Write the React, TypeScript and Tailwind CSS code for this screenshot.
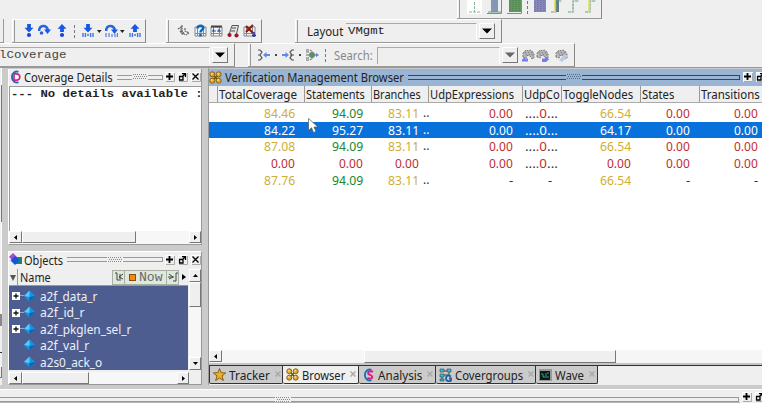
import React, { useLayoutEffect, useRef } from "react";

/* Text condensed or widened to a fixed measure. */
function Fit({ w, children, className = "" }: { w: number; children: React.ReactNode; className?: string }) {
  const ref = useRef<HTMLSpanElement>(null);
  useLayoutEffect(() => {
    const el = ref.current;
    if (el) el.style.transform = `scaleX(${w / el.offsetWidth})`;
  }, [w]);
  return (
    <span className={`flex shrink-0 items-center whitespace-nowrap ${className}`} style={{ width: w }}>
      <span ref={ref} className="block shrink-0 origin-left whitespace-pre">{children}</span>
    </span>
  );
}

const Bar = ({ className, children }: { className: string; children?: React.ReactNode }) => (
  <div className={`flex shrink-0 items-center border-t border-r border-b border-t-white border-r-[#888] border-b-[#999] ${className}`}>
    <div className="h-full w-[3px] shrink-0 border-r border-l border-r-[#999] border-l-white" />
    {children}
  </div>
);

const raised = "border border-t-white border-l-white border-r-[#777] border-b-[#777] bg-[#efefef]";

function Combo({ className, text, gray }: { className: string; text?: React.ReactNode; gray?: boolean }) {
  return (
    <div className={`flex shrink-0 items-center ${className}`}>
      <div className={`flex h-full flex-1 items-center overflow-hidden border-t border-r border-t-[#aaa] border-r-white ${gray ? "border-l border-l-[#aaa]" : ""}`}>{text}</div>
      <div className={`mr-px ml-[2px] flex h-[16px] w-[16px] items-center justify-center ${raised}`}>
        <svg width="10" height="6"><path d="M0 0.5h10L5 5.5z" fill={gray ? "#666" : "#000"} /></svg>
      </div>
    </div>
  );
}

const Arrow = ({ up, line }: { up?: boolean; line?: boolean }) => (
  <svg width="12" height="14" viewBox="0 0 12 14" className="shrink-0">
    <path d={up ? "M6 0l4.500 4.700H7.900V8H4.100V4.700H1.500z" : "M4.100 0h3.800v3.800h2.600L6 8.500 1.500 3.800h2.600z"} fill="#1858e8" />
    {line ? <path d="M1 9v4M3.4 9v4M8.6 9v4M11 9v4M5 11h2" stroke="#4674da" strokeWidth="1.4" /> : <circle cx="6" cy="11" r="2.1" fill="#1846da" />}
  </svg>
);
const Loop = ({ line }: { line?: boolean }) => (
  <svg width="13" height="14" viewBox="0 0 13 14" className="shrink-0">
    <path d="M1 7C1.5 1 8 0 10 6" fill="none" stroke="#2866df" strokeWidth="2.6" />
    <path d="M6 5.5h7L9.5 10z" fill="#1858e8" />
    {line ? <path d="M1 9v4M4 9v4M7 10v3M10 10v3M12.4 9v4" stroke="#5480dc" strokeWidth="1.2" /> : <circle cx="3.5" cy="9" r="1.8" fill="#315fd2" />}
  </svg>
);
const Dot = () => <svg width="5" height="3" className="shrink-0"><path d="M0 0h4.6L2.3 3z" fill="#222" /></svg>;
const Dash = () => <div className="h-[13px] w-px shrink-0 border-l border-dashed border-[#777]" />;

const MiniWindow = ({ kind }: { kind: string }) => (
  <svg width="13" height="14" viewBox="0 0 13 14" className="shrink-0">
    {kind === "wave" && <path d="M1 5l3-2v4l3 3M5 1v6l3 4M8 4v3l4 2-3 2M3 7l3 4" fill="none" stroke="#666" strokeWidth="1.2" strokeDasharray="2 0.5" />}
    {kind !== "wave" && kind !== "find" && <path d="M1 3h11v9H1zM1 9.5h11M3.5 3v9M9.5 3v9" fill="#f4f4f4" stroke="#858b8e" />}
    {kind === "help" && <path d="M3.5 4.500C3.500 .6 10 1 9.300 4.500C8.5 6 6.5 6 6.5 8.5M6.5 10v2.5" fill="none" stroke="#0869bd" strokeWidth="2.5" />}
    {kind === "win" && <><path d="M1 2.5h11" stroke="#444" strokeWidth="2" /><path d="M3.5 5v3M9 5v3M2 7h4M7 7h4" stroke="#2756ad" strokeWidth="1.2" /></>}
    {kind === "find" && <><path d="M2.500 9L5 1.500h6.500L9.500 10M5 4h4M4 7h4" fill="#e4e4e4" stroke="#555" /><circle cx="2.500" cy="11" r="2.1" fill="#a31424" /><circle cx="9.500" cy="11.5" r="2.1" fill="#a31424" /></>}
    {kind === "cut" && <><path d="M3 2l7 7M10 1L3 8" stroke="#8c1810" strokeWidth="2.2" /><path d="M11 8v5M9 11.5h4" stroke="#1934b8" strokeWidth="1.5" /></>}
  </svg>
);

const Branch = ({ kind }: { kind: number }) => (
  <svg width="14" height="12" viewBox="0 0 14 12" className="shrink-0">
    {kind === 0 && <><path d="M1 1h2l2 2-2 3H1h2l2 3-2 2H1" fill="none" stroke="#555" strokeWidth="1.2" /><path d="M6 6l3.5-3v2H13v2H9.500v2z" fill="#5a8de8" /></>}
    {kind === 1 && <><path d="M13 1h-2L9 3l2 3h2-4 2L9 9l2 2h2" fill="none" stroke="#555" strokeWidth="1.2" /><path d="M8 6L4.500 3v2H1v2h3.500v2z" fill="#5a8de8" /></>}
    {kind === 2 && <><path d="M1 1h4l3 2M1 6h12M1 11h4l3-2M1 3h3M1 9h3" fill="none" stroke="#666" strokeDasharray="3 1" /><circle cx="7" cy="6" r="3" fill="#5e8d66" /><path d="M11 4l3 2-3 2z" fill="#5579ff" /></>}
  </svg>
);

const Binoculars = ({ kind }: { kind: number }) => (
  <svg width="13" height="13" viewBox="0 0 13 13" className="shrink-0">
    <path d="M1 8V4l2-2 2-1 1 1 2-1 2 1 2 3v4l-2 1-2-3-2-1-2 3z" fill="#b8b8b8" stroke="#777" strokeDasharray="2 1" />
    <path d="M3 3l2 4M6 3l2 3M9 3l2 4" stroke="#777" strokeDasharray="1.5 1" />
    {kind === 0 && <path d="M0 10.500L3 8v1.500h3v3H0z" fill="#7b7bf0" />}
    {kind === 1 && <path d="M13 10.500L10 13H6V9.500h3V8h2z" fill="#7b7bf0" />}
    {kind === 2 && <path d="M4 11l6-6 3 2-6 6z" fill="#b9cce3" />}
  </svg>
);

const Edge = ({ kind }: { kind: number }) => {
  const fills = ["#fff", "#8497b5", "#64965e", "#8888ba"];
  return (
    <svg width="15" height="14" viewBox="0 0 15 14" className="shrink-0">
      {kind < 3 && <><path d="M0 0h15v14H0z" fill={kind ? "#eee" : "#fff"} />{kind > 0 && <path d="M14.5 0v13.5H0" fill="none" stroke="#888" />}</>}
      {kind === 0 && <path d="M2 12h11M7.5 2v10" stroke="#86b59a" strokeDasharray="3 1" />}
      {kind === 1 && <><path d="M4 0h7v12H4z" fill={fills[1]} /><path d="M1 12h13" stroke="#6c9b81" /></>}
      {(kind === 2 || kind === 3) && <><path d="M2 0h12v12H2z" fill={fills[kind]} /><path d="M3 1v11M6 0v12M9 0v12M12 0v12" stroke={kind === 2 ? "#438050" : "#62679c"} strokeDasharray="1 1" /></>}
      {kind > 3 && <>{kind === 4 && <path d="M6 0h4v12H6z" fill="#637991" />}<path d="M2 12h5V1h6" fill="none" stroke="#69a57c" strokeWidth="1.2" strokeDasharray="3 .6" />{kind !== 5 && <path d="M6 0v12" stroke="#e9dc49" strokeWidth="1.5" />}</>}
    </svg>
  );
};

function TitleButtons() {
  return (
    <div className="flex shrink-0 gap-[3px]">
      {["M4.500 1v7M1 4.500h7", "M1.500 4.500h3.500v3.500H1.500zM4 5l3-3M4 1.700h3.500V5", "M1.500 1.500l6 6M7.500 1.500l-6 6"].map((d, i) => (
        <svg key={i} width="10" height="10" viewBox="0 0 10 10" className="bg-[#eee]">
          <path d="M.5 9.500V.5h9" fill="none" stroke="#fff" /><path d="M9.500 1v8.500H1" fill="none" stroke="#aaa" />
          <path d={d} fill="none" stroke="#000" strokeWidth={i === 0 ? 1.8 : 1.3} />
        </svg>
      ))}
    </div>
  );
}

const Rails = ({ blue, className, left = "flex-1" }: { blue?: boolean; className: string; left?: string }) => (
  <div className={`flex h-[5px] shrink-0 items-center ${className}`}>
    <div className={`h-[5px] border-t border-b ${left} ${blue ? "border-[#294967]" : "border-[#999]"}`} />
    <svg width="16" height="6" className="shrink-0">
      {[1, 3, 5].map((y) => <path key={y} d={`M${y === 3 ? 2 : 1} ${y - 0.5}h14`} stroke={blue ? "#516e8b" : "#888"} strokeDasharray="1 1" />)}
    </svg>
    <div className={`h-[5px] flex-1 border-t border-r border-b ${blue ? "border-[#294967]" : "border-[#999]"}`} />
  </div>
);

const Bronze = () => (
  <svg width="13" height="13" viewBox="0 0 13 13" className="shrink-0">
    <path d="M3 3l7 7M10 3l-7 7" stroke="#72500d" strokeWidth="1.500" />
    {[[3.3, 3.3], [9.7, 3.3], [3.3, 9.7], [9.7, 9.7]].map(([x, y]) => (
      <g key={`${x}-${y}`}><circle cx={x} cy={y} r="2.5" fill="#dcaa30" stroke="#8a6314" /><circle cx={x - 0.6} cy={y - 0.6} r="1" fill="#f5d77a" /></g>
    ))}
  </svg>
);
const Ring = ({ letter }: { letter: string }) => (
  <svg width="13" height="14" viewBox="0 0 13 14" className="shrink-0">
    <path d="M9.500 1.800A5 5.500 0 1 0 9.500 12.200" fill="none" stroke="#1d70b8" strokeWidth="1.900" />
    {letter === "D" ? <path d="M5 3.800h2C12 3.800 12 10.200 7 10.200H5z" fill="#fff" stroke="#d42183" strokeWidth="1.700" /> : <path d="M11 3.800C7 2.500 5.500 4 6.500 6c1 1 4 1 3.800 3C10 11 7.500 11 5.500 10" fill="none" stroke="#d42183" strokeWidth="2" />}
  </svg>
);
const Diamond = () => (
  <svg width="11" height="12" viewBox="0 0 11 12" className="shrink-0">
    <path d="M5.500.5L11 6l-5.500 5.500L0 6z" fill="#1196e8" /><path d="M5.500.5L0 6l5.500 1z" fill="#57c9fa" /><path d="M11 6l-5.500 5.500V7z" fill="#0763ab" />
  </svg>
);

const Tip = ({ dir, className = "" }: { dir: "l" | "r" | "u" | "d"; className?: string }) => (
  <div className={`flex shrink-0 items-center justify-center ${raised} ${className}`}>
    <svg width="5" height="5" viewBox="0 0 5 5">
      <path d={{ l: "M4 0v5L1 2.500z", r: "M1 0v5l3-2.500z", u: "M0 4h5L2.500 1z", d: "M0 1h5L2.500 4z" }[dir]} />
    </svg>
  </div>
);

const Y = "text-[#cfae35]", G = "text-[#20852c]", R = "text-[#bf2e2d]", K = "text-[#333]";
const columns = [
  { name: "TotalCoverage", box: "w-[87px] pr-[9px]", w: 78 },
  { name: "Statements", box: "w-[67px] pr-[8px]", w: 59 },
  { name: "Branches", box: "w-[57px] pr-[9px]", w: 48 },
  { name: "UdpExpressions", box: "w-[94px] pr-[9px]", w: 84 },
  { name: "UdpCo", box: "w-[39px]", w: 36 },
  { name: "ToggleNodes", box: "w-[79px] pr-[9px]", w: 70 },
  { name: "States", box: "w-[59px] pr-[9px]", w: 32 },
  { name: "Transitions", box: "w-[63px] pr-[4px]", w: 59 },
];
const rows = [
  [["84.46", Y], ["94.09", G], ["83.11", Y], ["0.00", R], ["u", R], ["66.54", Y], ["0.00", R], ["0.00", R]],
  [["84.22", ""], ["95.27", ""], ["83.11", ""], ["0.00", ""], ["u", ""], ["64.17", ""], ["0.00", ""], ["0.00", ""]],
  [["87.08", Y], ["94.09", G], ["83.11", Y], ["0.00", R], ["u", R], ["66.54", Y], ["0.00", R], ["0.00", R]],
  [["0.00", R], ["0.00", R], ["0.00", R], ["0.00", R], ["u", R], ["0.00", R], ["0.00", R], ["0.00", R]],
  [["87.76", Y], ["94.09", G], ["83.11", Y], ["-", K], ["-", K], ["66.54", Y], ["-", K], ["-", K]],
];

function Cell({ v, c, i, r }: { v: string; c: string; i: number; r: number }) {
  const w = v === "-" ? 4 : v.length === 4 ? 24 : 31;
  const dots = r === 1 ? "" : "text-[#333]";
  return (
    <div className={`flex shrink-0 ${i === 4 ? "justify-start pl-[3px]" : "justify-end"} ${columns[i].box} ${c}`}>
      {v === "u" ? <Fit w={33}><span className={dots}>...</span>.0<span className={dots}>...</span></Fit>
        : <Fit w={w} className={i === 4 ? "ml-[23px]" : ""}>{v}</Fit>}
      {i === 2 && <span className={`-mr-[9px] w-[9px] pl-[4px] text-[12px] ${r === 1 ? "text-white" : "text-[#333]"}`}>{r === 3 ? "" : ".."}</span>}
    </div>
  );
}

const Tab = ({ icon, text, w, className }: { icon: React.ReactNode; text: string; w: number; className: string }) => (
  <div className={`flex h-[18px] shrink-0 items-center rounded-b-[2px] border-r border-b border-l border-[#333] pl-[3px] ${className}`}>
    {icon}<Fit w={w} className="ml-[3px]">{text}</Fit>
    <svg width="6" height="6" viewBox="0 0 6 6" className="mb-[2px] ml-[5px] shrink-0"><path d="M.5.5l5 5M5.500.5l-5 5" stroke="#aaa" strokeWidth="1.500" /></svg>
  </div>
);

export default function App() {
  return (
    <div className="relative flex h-[403px] w-[762px] flex-col overflow-hidden bg-[#efefef] font-['Noto_Sans',sans-serif] text-[13px] leading-[16px] text-[#222]">
      <div className="flex h-[19px] shrink-0 pl-[457px]">
        <Bar className="-mt-px w-[145px]">
          <div className="-mt-[4px] ml-[7px] flex items-center gap-[5px]">
            <Edge kind={0} /><Edge kind={1} /><Edge kind={2} /><Dash />
          </div>
          <div className="-mt-[4px] ml-[4px] flex gap-[2px]"><Edge kind={3} /><Edge kind={4} /><Edge kind={5} /><Edge kind={6} /></div>
        </Bar>
      </div>
      <div className="flex h-[24px] shrink-0">
        <div className="w-[4px] border-r border-b border-[#999]" />
        <Bar className="ml-[8px] w-[134px]">
          <div className="ml-[8px] flex items-center">
            <Arrow /><div className="w-[3px]" /><Loop /><div className="w-[5px]" /><Arrow up />
            <div className="w-[6px]" /><Dash /><div className="w-[7px]" />
            <Arrow line /><div className="w-[3px]" /><Dot /><div className="w-[3px]" /><Loop line /><div className="w-[2px]" /><Dot /><div className="w-[4px]" /><Arrow up line />
          </div>
        </Bar>
        <Bar className="ml-[20px] w-[96px]">
          <div className="ml-[8px] flex items-center gap-[3.500px]">
            {["wave", "help", "win", "find", "cut"].map((k) => <MiniWindow key={k} kind={k} />)}
          </div>
        </Bar>
        <Bar className="ml-[33px] w-[207px]">
          <Fit w={36} className="ml-[9px]">Layout</Fit>
          <Combo className="ml-[3px] h-[17px] w-[150px]" text={<Fit w={37} className="ml-[2px] pb-px font-['Liberation_Mono',monospace] text-[11px]">VMgmt</Fit>} />
        </Bar>
      </div>
      <div className="flex h-[24px] shrink-0">
        <div className="flex w-[235px] items-center border-t border-r border-b border-t-white border-r-[#888] border-b-[#999]">
          <Combo className="h-[17px] w-[229px]" text={<Fit w={67} className="-ml-px pb-px font-['Liberation_Mono',monospace] text-[11px] text-[#444]">lCoverage</Fit>} />
        </div>
        <Bar className="ml-[13px] w-[327px]">
          <div className="ml-[6px] flex items-center">
            <Branch kind={0} /><div className="mx-[4px] h-[2px] w-[2px] bg-[#444]" /><Branch kind={1} /><div className="mx-[4px] h-[2px] w-[2px] bg-[#444]" /><Branch kind={2} />
          </div>
          <div className="mr-[8px] ml-[6px]"><Dash /></div>
          <Fit w={39} className="text-[#888]">Search:</Fit>
          <Combo gray className="ml-[4px] h-[17px] w-[142px]" />
          <div className="ml-[3px] flex gap-px"><Binoculars kind={0} /><Binoculars kind={1} /><div className="w-[4px]" /><Binoculars kind={2} /></div>
        </Bar>
      </div>

      <div className="flex h-[318px] shrink-0 border-t border-[#999] bg-[#cbcbcb]">
        <div className="flex w-[2px] shrink-0 flex-col bg-[#efefef]">
          <div className="h-[17px] border-r border-white" />
          <div className="h-[137px] border-r border-[#777]" />
          <div className="h-[92px] border-r border-white" />
          <div className="h-[12px] bg-[#888]" />
          <div className="mt-[26px] h-px bg-[#333]" />
          <div className="mt-[14px] h-[11px] border-r border-b border-[#777]" />
        </div>
        <div className="ml-[6px] flex w-[194px] shrink-0 flex-col pt-px">
          <div className="flex h-[176px] shrink-0 flex-col border-r border-b border-l border-[#999] border-l-white bg-[#efefef]">
            <div className="flex h-[17px] shrink-0 items-center pb-px">
              <Ring letter="D" /><Fit w={89} className="ml-[2px]">Coverage Details</Fit>
              <Rails className="ml-[4px] w-[46px]" /><div className="ml-[2px]"><TitleButtons /></div>
            </div>
            <div className="h-[145px] overflow-hidden border-t border-l border-[#999] bg-white font-['Liberation_Mono',monospace] text-[11px] font-bold leading-[15px]">
              <Fit w={192} className="pl-px">--- No details available :</Fit>
            </div>
            <div className="flex h-[13px] w-full bg-[#f7f7f7]">
              <Tip dir="l" className="h-[12px] w-[13px]" /><div className={`h-[12px] w-[114px] ${raised}`} /><Tip dir="r" className="ml-auto h-[12px] w-[12px]" />
            </div>
          </div>
          <div className="mt-[6px] flex h-[134px] shrink-0 flex-col border-t border-r border-b border-l border-white border-r-[#999] border-b-[#999] bg-[#efefef]">
            <div className="flex h-[17px] shrink-0 items-center pb-[2px]">
              <svg width="13" height="13" viewBox="0 0 13 13" className="shrink-0"><path d="M6 4h7v7H6z" fill="#238364" /><path d="M4 0l4 4-4 4-4-4z" fill="#b046c9" /><path d="M6 3l4.500 4.500L6 12 1.500 7.500z" fill="#1554dc" /></svg>
              <Fit w={39} className="ml-[2px]">Objects</Fit>
              <Rails className="ml-[4px] w-[96px]" /><div className="ml-[2px]"><TitleButtons /></div>
            </div>
            <div className="flex h-[101px]">
              <div className="w-[179px]">
                <div className="flex h-[17px] items-center border-b border-[#999]">
                  <svg width="9" height="17" className="shrink-0 border-r border-[#999]"><path d="M1 6h6l-3 6z" fill="#555" /></svg>
                  <Fit w={31} className="ml-[2px]">Name</Fit>
                  <div className="ml-auto flex h-[15px] items-center border border-[#a8b0a6] bg-[#dfe8dc]">
                    <svg width="12" height="13" className="border-r border-[#a8b0a6]"><path d="M2 2h2v7h4M10 3L6 6l4 2M7 3v5" fill="none" stroke="#444" /></svg>
                    <div className="ml-[4px] h-[7px] w-[7px] border border-[#8c4b10] bg-[#f58a08]" />
                    <Fit w={24} className="mr-[3px] ml-[3px] h-[13px] pt-[2px] font-['Liberation_Mono',monospace] text-[12px] text-[#666]">Now</Fit>
                    <svg width="12" height="13" className="border-l border-[#a8b0a6]"><path d="M2 3l4 3-4 2M1 6h6M6 10h3V2h2" fill="none" stroke="#444" /></svg>
                  </div>
                  <svg width="7" height="9" className="ml-[2px]"><path d="M1 1v6l4-3z" /></svg>
                </div>
                <div className="h-[84px] overflow-hidden bg-[#4e5d90] pt-[1.500px] text-[#edf0f8]">
                  {([["a2f_data_r", 57, 1], ["a2f_id_r", 44, 1], ["a2f_pkglen_sel_r", 91, 1], ["a2f_val_r", 49, 0], ["a2s0_ack_o", 62, 0]] as [string, number, number][]).map(([t, w, p]) => (
                    <div key={t} className="flex h-[16.5px] items-center pl-[3px]">
                      <svg width="12" height="9" className={p ? "" : "invisible"}><path d="M8 4.500h4" stroke="#9aa5c8" /><path d="M0 1h8v8H0z" fill="#fff" /><path d="M4 2.500v5M1.500 5h5" stroke="#111" strokeWidth="1.300" /></svg>
                      <Diamond /><Fit w={w} className="ml-[5px]">{t}</Fit>
                    </div>
                  ))}
                </div>
              </div>
              <div className="ml-auto flex h-full w-[12px] flex-col bg-[#f7f7f7]">
                <Tip dir="u" className="h-[13px]" /><div className={`h-[25px] ${raised}`} /><Tip dir="d" className="mt-auto h-[13px]" />
              </div>
            </div>
            <div className="mt-[2px] flex h-[12px] w-[180px] shrink-0 bg-[#f7f7f7]">
              <Tip dir="l" className="w-[13px]" /><div className={`w-[67px] ${raised}`} /><Tip dir="r" className="ml-auto w-[12px]" />
            </div>
          </div>
        </div>
        <div className="ml-[6px] flex w-[554px] shrink-0 flex-col border-l border-[#999] pt-px">
          <div className="flex h-[17px] w-[569px] shrink-0 items-center bg-[#9ab4d3] pb-px">
            <Bronze /><Fit w={179} className="ml-[3px]">Verification Management Browser</Fit>
            <Rails blue className="mr-[3px] ml-[4px] w-[332px]" /><TitleButtons />
          </div>
          <div className="flex h-[17px] shrink-0 overflow-hidden border-b border-[#aaa] bg-[#efefef] pl-[8px]">
            {columns.map((c) => (
              <div key={c.name} className={`flex shrink-0 items-center border-l border-[#999] ${c.box} pr-0`}><Fit w={c.w} className="ml-px">{c.name}</Fit></div>
            ))}
          </div>
          <div className="h-[247px] shrink-0 overflow-hidden bg-white pt-[2px]">
            {rows.map((r, ri) => (
              <div key={ri} className={`flex h-[16.6px] items-center pl-[8px] ${ri === 1 ? "bg-[#0871db] text-white" : ""}`}>
                {r.map(([v, c], i) => <Cell key={i} v={v} c={c} i={i} r={ri} />)}
              </div>
            ))}
          </div>
          <div className="flex h-[13px] shrink-0 bg-[#f6f6f6]">
            <Tip dir="l" className="h-[12px] w-[13px]" /><div className={`ml-[142px] h-[13px] w-[252px] ${raised}`} />
          </div>
          <div className="flex h-[22px] shrink-0 flex-col bg-[#efefef]">
            <div className="h-[3px] border-b border-[#333] bg-[#c4c4c4]" />
            <div className="flex">
              <Tab className="w-[74px] bg-[#cbcbcb]" w={41} text="Tracker" icon={<svg width="13" height="13" viewBox="0 0 14 14"><path d="M7 .5l1.700 4.500 5 .3-4 3.200 1.500 5L7 10.800l-4.200 2.700 1.500-5-4-3.200 5-.3z" fill="#edae22" stroke="#805713" /></svg>} />
              <Tab className="w-[76px] border-l-0 bg-[#efefef]" w={43} text="Browser" icon={<Bronze />} />
              <Tab className="w-[77px] border-l-0 bg-[#cbcbcb]" w={44} text="Analysis" icon={<Ring letter="S" />} />
              <Tab className="w-[100px] border-l-0 bg-[#cbcbcb]" w={68} text="Covergroups" icon={<svg width="13" height="14" viewBox="0 0 13 14" className="shrink-0"><path d="M3 3h7v4H3v4" fill="none" stroke="#345" /><path d="M1 1h4v3H1zM8 1h4v3H8zM1 6h4v3H1zM1 11h4v2H1z" fill="#30bed0" stroke="#345" strokeWidth=".6" /><path d="M12 8.500C9 6.500 7 8 7 10.500s3 3.500 5 2v-2h-2" fill="none" stroke="#155fa6" strokeWidth="1.800" /></svg>} />
              <Tab className="w-[62px] border-l-0 bg-[#cbcbcb]" w={29} text="Wave" icon={<svg width="13" height="12" viewBox="0 0 13 12"><path d="M0 0h13v12H0z" fill="#999" /><path d="M1 2h10v9H1z" fill="#10161c" /><path d="M2 5h2v3h2M7 4v5M8 4h2M8 8h2" stroke="#26a97a" fill="none" /></svg>} />
            </div>
          </div>
        </div>
      </div>
      <div className="flex h-[18px] shrink-0 flex-col bg-[#efefef]">
        <div className="h-[5px] shrink-0 border-b border-white bg-[#cbcbcb]" />
        <div className="flex h-[12px] shrink-0 items-end overflow-hidden">
          <Rails className="w-[739px]" left="w-[275px]" />
          <div className="ml-[3px] shrink-0"><TitleButtons /></div>
        </div>
        <div className="h-px w-[740px] bg-[#b5b5b5]" />
      </div>
      <svg width="12" height="16" viewBox="0 0 12 16" className="absolute top-[118px] left-[308px]">
        <path d="M.5.5v12l3-2.800 2 4.800 2.500-1-2-4.500h4z" fill="#fff" stroke="#555" strokeWidth=".7" />
      </svg>
    </div>
  );
}
